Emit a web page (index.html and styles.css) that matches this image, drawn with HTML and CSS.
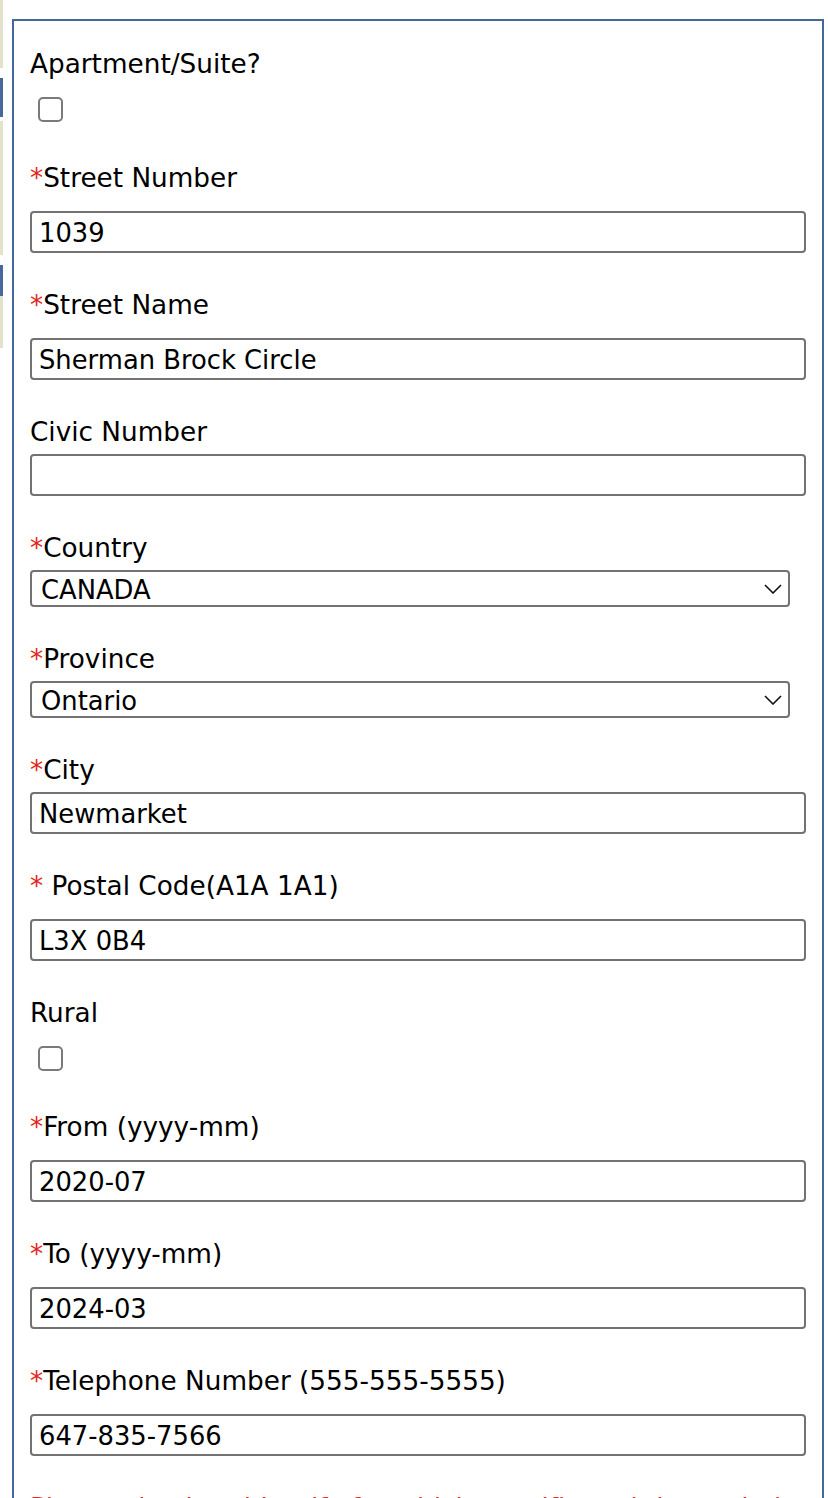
FILE: index.html
```html
<!DOCTYPE html>
<html lang="en">
<head>
<meta charset="utf-8">
<title>Address</title>
<link rel="stylesheet" href="styles.css">
</head>
<body>
<div class="page">
  <div class="side">
    <div class="seg beige s1"></div>
    <div class="seg gap1"></div>
    <div class="seg blue s2"></div>
    <div class="seg gap2"></div>
    <div class="seg beige s3"></div>
    <div class="seg gap1"></div>
    <div class="seg blue s4"></div>
    <div class="seg beige s5"></div>
  </div>
  <div class="panel">
    <div class="field check-field">
      <label class="lbl">Apartment/Suite?</label>
      <input type="checkbox" class="cb">
    </div>
    <div class="field wide">
      <label class="lbl"><span class="req">*</span>Street Number</label>
      <input type="text" class="txt" value="1039">
    </div>
    <div class="field wide">
      <label class="lbl"><span class="req">*</span>Street Name</label>
      <input type="text" class="txt" value="Sherman Brock Circle">
    </div>
    <div class="field tight">
      <label class="lbl">Civic Number</label>
      <input type="text" class="txt" value="">
    </div>
    <div class="field tight">
      <label class="lbl"><span class="req">*</span>Country</label>
      <div class="sel-wrap">
        <select class="sel"><option>CANADA</option></select>
        <svg class="chev" width="18" height="10" viewBox="0 0 18 10"><path d="M1 1 L9 9 L17 1" fill="none" stroke="#111" stroke-width="1.6"/></svg>
      </div>
    </div>
    <div class="field tight">
      <label class="lbl"><span class="req">*</span>Province</label>
      <div class="sel-wrap">
        <select class="sel"><option>Ontario</option></select>
        <svg class="chev" width="18" height="10" viewBox="0 0 18 10"><path d="M1 1 L9 9 L17 1" fill="none" stroke="#111" stroke-width="1.6"/></svg>
      </div>
    </div>
    <div class="field tight">
      <label class="lbl"><span class="req">*</span>City</label>
      <input type="text" class="txt" value="Newmarket">
    </div>
    <div class="field wide">
      <label class="lbl"><span class="req">*</span> Postal Code(A1A 1A1)</label>
      <input type="text" class="txt" value="L3X 0B4">
    </div>
    <div class="field check-field">
      <label class="lbl">Rural</label>
      <input type="checkbox" class="cb">
    </div>
    <div class="field wide">
      <label class="lbl"><span class="req">*</span>From (yyyy-mm)</label>
      <input type="text" class="txt" value="2020-07">
    </div>
    <div class="field wide">
      <label class="lbl"><span class="req">*</span>To (yyyy-mm)</label>
      <input type="text" class="txt" value="2024-03">
    </div>
    <div class="field wide">
      <label class="lbl"><span class="req">*</span>Telephone Number (555-555-5555)</label>
      <input type="text" class="txt" value="647-835-7566">
    </div>
    <p class="note">Please check to identify for which specific and the periods</p>
  </div>
</div>
</body>
</html>
```

FILE: styles.css
```css
html, body {
  margin: 0;
  padding: 0;
  background: #fff;
}
body {
  font-family: "DejaVu Sans", Verdana, sans-serif;
  color: #000;
  overflow: hidden;
  height: 1498px;
}
.page {
  display: flex;
  align-items: flex-start;
}
.side {
  width: 3px;
  display: flex;
  flex-direction: column;
  flex-shrink: 0;
}
.seg { width: 3px; }
.beige { background: #e3e1cb; }
.blue { background: #47689c; }
.s1 { height: 68px; }
.gap1 { height: 10px; }
.gap2 { height: 4px; }
.s2 { height: 39px; }
.s3 { height: 134px; }
.s4 { height: 31px; }
.s5 { height: 52px; }

.panel {
  margin-left: 9px;
  margin-top: 19px;
  width: 778px;
  border: 2px solid #45689c;
  padding: 28px 14px 40px 16px;
  flex-shrink: 0;
}
.field {
  display: flex;
  flex-direction: column;
  align-items: flex-start;
}
.lbl {
  font-size: 26.3px;
  line-height: 30px;
  display: block;
}
.req {
  color: #e3261b;
}
.wide { margin-bottom: 37px; }
.wide .lbl { margin-bottom: 18px; }
.tight { margin-bottom: 37px; }
.tight .lbl { margin-bottom: 7px; }
.check-field { margin-bottom: 41px; }
.check-field .lbl { margin-bottom: 18px; }

.txt {
  box-sizing: border-box;
  width: 776px;
  height: 42px;
  margin: 0;
  border: 2px solid #727272;
  border-radius: 4px;
  padding: 2px 7px 0;
  font-family: "DejaVu Sans", Verdana, sans-serif;
  font-size: 25.8px;
  color: #000;
  background: #fff;
  outline: none;
}
.cb {
  -webkit-appearance: none;
  appearance: none;
  box-sizing: border-box;
  width: 25px;
  height: 25px;
  margin: 0 0 0 8px;
  border: 2px solid #7a7a7a;
  border-radius: 5px;
  background: #fff;
}
.sel-wrap {
  position: relative;
  width: 760px;
  height: 37px;
}
.sel {
  -webkit-appearance: none;
  appearance: none;
  box-sizing: border-box;
  width: 760px;
  height: 37px;
  margin: 0;
  border: 2px solid #727272;
  border-radius: 4px;
  padding: 2px 9px 0;
  font-family: "DejaVu Sans", Verdana, sans-serif;
  font-size: 25.8px;
  color: #000;
  background: #fff;
}
.chev {
  position: absolute;
  right: 8px;
  top: 14px;
  pointer-events: none;
}
.note {
  margin: 30px 0 0;
  font-size: 26.3px;
  line-height: 30px;
  color: #e3261b;
}
```
